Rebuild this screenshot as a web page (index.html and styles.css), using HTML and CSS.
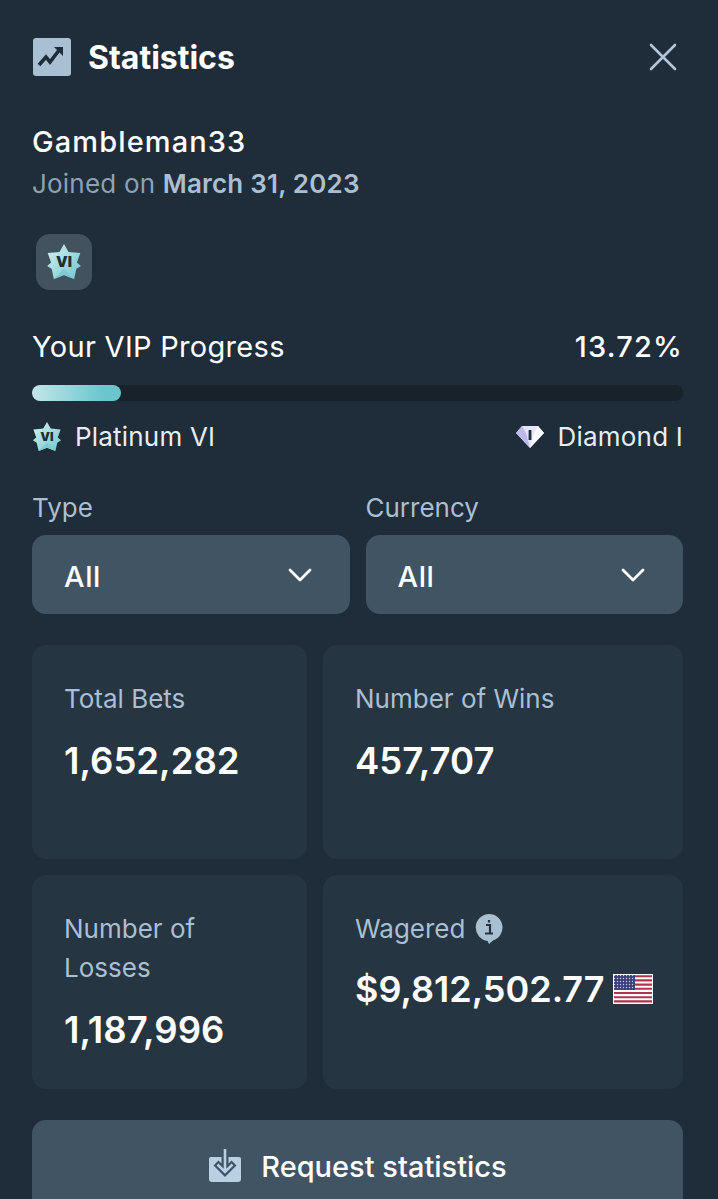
FILE: index.html
```html
<!DOCTYPE html>
<html lang="en">

<head>
    <meta charset="UTF-8">
    <meta name="viewport" content="width=device-width, initial-scale=1.0">
    <title>Statistics</title>
    <link rel="stylesheet" href="styles.css">
</head>

<body>
    <div class="panel">
        <header class="header">
            <svg class="header-icon" viewBox="0 0 38 38">
                <rect width="38" height="38" rx="3" fill="#a9bfd2" />
                <path d="M6 27l7-8 4 5 10-13" fill="none" stroke="#1f2c39" stroke-width="3.600" />
                <path d="M21 9h9v9z" fill="#1f2c39" />
            </svg>
            <h1 class="title">Statistics</h1>
            <svg class="close" viewBox="0 0 30 30">
                <path d="M3 3l24 24M27 3L3 27" stroke="#b1c6d8" stroke-width="2.600" stroke-linecap="round" />
            </svg>
        </header>

        <div class="user">Gambleman33</div>
        <div class="joined">Joined on <b>March 31, 2023</b></div>

        <div class="badge">
            <svg class="star star-big" viewBox="0 0 32 32">
                <use href="#star" />
            </svg>
        </div>

        <div class="progress-head">
            <span>Your VIP Progress</span>
            <span class="percent">13.72%</span>
        </div>
        <div class="bar">
            <div class="bar-fill" style="width: 13.72%"></div>
        </div>
        <div class="levels">
            <div class="level">
                <svg class="star" viewBox="0 0 32 32">
                    <defs>
                        <linearGradient id="star-grad" x1="0" y1="0" x2="1" y2="1">
                            <stop offset="0" stop-color="#d3f1f3" />
                            <stop offset="1" stop-color="#6fc6cd" />
                        </linearGradient>
                    </defs>
                    <g id="star">
                        <path d="M16 0l4 7 10.500 1-3 8.500 3.500 3-4 2.500L25 31l-9-3.500L7 31l-2-9-4-2.500 3.500-3-3-8.500L12 7z" fill="url(#star-grad)" />
                        <path d="M16 22l9 9-9-3.500L7 31z" fill="#7ccbd2" />
                        <text x="16" y="20.500" class="star-text">VI</text>
                    </g>
                </svg>
                <span>Platinum VI</span>
            </div>
            <div class="level">
                <svg class="diamond" viewBox="0 0 30 24">
                    <path d="M7 1h16l6 7-14 15L1 8z" fill="#e6e4fa" />
                    <path d="M1 8l6-7 4 7 4 15z" fill="#bdb9ee" />
                    <path d="M29 8l-6-7-4 7-4 15z" fill="#f7fbff" />
                    <rect x="13.600" y="5" width="2.800" height="10" fill="#1f2c39" />
                </svg>
                <span>Diamond I</span>
            </div>
        </div>

        <div class="filters">
            <div class="filter">
                <label class="filter-label">Type</label>
                <div class="select">
                    <span>All</span>
                    <svg class="chevron" viewBox="0 0 24 14">
                        <path d="M2 2l10 10L22 2" fill="none" stroke="#fff" stroke-width="2.800" stroke-linecap="round" stroke-linejoin="round" />
                    </svg>
                </div>
            </div>
            <div class="filter">
                <label class="filter-label">Currency</label>
                <div class="select">
                    <span>All</span>
                    <svg class="chevron" viewBox="0 0 24 14">
                        <path d="M2 2l10 10L22 2" fill="none" stroke="#fff" stroke-width="2.800" stroke-linecap="round" stroke-linejoin="round" />
                    </svg>
                </div>
            </div>
        </div>

        <div class="cards">
            <div class="card">
                <div class="card-label">Total Bets</div>
                <div class="card-value">1,652,282</div>
            </div>
            <div class="card">
                <div class="card-label">Number of Wins</div>
                <div class="card-value">457,707</div>
            </div>
            <div class="card">
                <div class="card-label">Number of<br>Losses</div>
                <div class="card-value">1,187,996</div>
            </div>
            <div class="card">
                <div class="card-label">Wagered
                    <svg class="info" viewBox="0 0 28 30">
                        <path d="M14 0a13.500 13.500 0 0 1 4 26.400L14 30l-1.400-3.100A13.500 13.500 0 0 1 14 0z" fill="#a9bfd2" />
                        <path d="M11 11h4v8M10 19.500h8M14 6v2.600" fill="none" stroke="#26333f" stroke-width="2.200" />
                    </svg>
                </div>
                <div class="card-value card-value-up">$9,812,502.77
                    <svg class="flag" viewBox="0 0 40 30">
                        <defs>
                            <pattern id="flag-stars" width="3" height="3" patternUnits="userSpaceOnUse">
                                <rect width="3" height="3" fill="#3c3f78" />
                                <circle cx="1.500" cy="1.500" r="0.700" fill="#c9cde6" />
                            </pattern>
                        </defs>
                        <rect width="40" height="30" fill="#fff" />
                        <path d="M1 2.200h38M1 6.400h38M1 10.600h38M1 14.800h38M1 19h38M1 23.200h38M1 27.400h38" stroke="#b8304f" stroke-width="2.100" />
                        <rect x="1" y="1" width="21" height="15" fill="url(#flag-stars)" />
                    </svg>
                </div>
            </div>
        </div>

        <button class="request" type="button">
            <svg class="request-icon" viewBox="0 0 34 34">
                <path d="M3 8h28a2 2 0 0 1 2 2v20a3 3 0 0 1-3 3H4a3 3 0 0 1-3-3V10a2 2 0 0 1 2-2z" fill="#b9d0e2" />
                <path d="M17 8v15M8 14l9 9 9-9" fill="none" stroke="#415463" stroke-width="7" />
                <path d="M17 0v23M9.500 15.500l7.500 7.500 7.500-7.500" fill="none" stroke="#b9d0e2" stroke-width="2.600" />
            </svg>
            Request statistics
        </button>
    </div>
</body>

</html>
```

FILE: styles.css
```css
html,
body {
    margin: 0;
    height: 1199px;
    overflow: hidden;
}

body {
    font-family: "Inter", "Open Sans", sans-serif;
    background-color: #1f2c39;
    color: #fff;
}

.panel {
    padding: 38px 35px 0 32px;
}

.header {
    display: flex;
    align-items: center;
    height: 38px;
    margin-bottom: 47px;
}

.header-icon {
    width: 38px;
    height: 38px;
    margin: 0 17px 0 1px;
}

.title {
    margin: 0;
    flex: 1;
    font-size: 32px;
    font-weight: 700;
}

.close {
    width: 30px;
    height: 30px;
    margin-right: 5px;
}

.user {
    font-size: 29px;
    font-weight: 500;
    line-height: 38px;
    letter-spacing: 1.1px;
}

.joined {
    margin-top: 5px;
    font-size: 26px;
    line-height: 36px;
    letter-spacing: 0.2px;
    color: #8ba2b6;
}

.joined b {
    font-weight: 600;
    color: #a9bfd2;
}

.badge {
    display: flex;
    align-items: center;
    justify-content: center;
    width: 56px;
    height: 56px;
    margin: 32px 0 38px 4px;
    background-color: #42535f;
    border-radius: 14px;
}

.star {
    width: 30px;
    height: 30px;
}

.star-big {
    width: 36px;
    height: 36px;
}

.star-text {
    font-size: 13px;
    font-weight: 900;
    text-anchor: middle;
    fill: #1f2c39;
}

.progress-head {
    display: flex;
    justify-content: space-between;
    font-size: 29px;
    line-height: 38px;
    letter-spacing: 0.3px;
}

.percent {
    font-weight: 500;
    letter-spacing: 1.200px;
}

.bar {
    height: 16px;
    margin-top: 19px;
    background-color: #17222b;
    border-radius: 8px;
}

.bar-fill {
    height: 100%;
    background: linear-gradient(90deg, #c3e6ea, #6cc5cd 80%);
    border-radius: 8px;
}

.levels {
    display: flex;
    justify-content: space-between;
    margin-top: 19px;
    font-size: 26px;
    line-height: 34px;
    letter-spacing: 0.2px;
    color: #e6eef5;
}

.level {
    display: flex;
    align-items: center;
    gap: 13px;
}

.diamond {
    width: 30px;
    height: 24px;
}

.filters {
    display: grid;
    grid-template-columns: 1fr 1fr;
    gap: 16px;
    margin-top: 37px;
}

.filter-label {
    display: block;
    font-size: 26px;
    line-height: 34px;
    color: #a9bfd2;
}

.select {
    display: flex;
    align-items: center;
    justify-content: space-between;
    height: 79px;
    margin-top: 10px;
    padding: 0 38px 0 32px;
    font-size: 29px;
    font-weight: 500;
    letter-spacing: 0.6px;
    background-color: #415463;
    border-radius: 14px;
}

.select span {
    padding-top: 3px;
}

.chevron {
    width: 24px;
    height: 14px;
}

.cards {
    display: grid;
    grid-template-columns: 275px 1fr;
    grid-auto-rows: 214px;
    gap: 16px;
    margin-top: 31px;
}

.card {
    padding: 34px 20px 0 32px;
    background-color: #263542;
    border-radius: 14px;
}

.card-label {
    display: flex;
    flex-wrap: wrap;
    align-items: center;
    gap: 0 10px;
    font-size: 26px;
    line-height: 39px;
    color: #a9bfd2;
}

.card-value {
    display: flex;
    align-items: center;
    gap: 8px;
    margin-top: 19px;
    font-size: 36.500px;
    font-weight: 600;
    line-height: 48px;
    white-space: nowrap;
}

.card-value-up {
    margin-top: 17px;
    font-size: 36px;
}

.info {
    width: 28px;
    height: 30px;
}

.flag {
    width: 40px;
    height: 30px;
}

.request {
    display: flex;
    align-items: center;
    justify-content: center;
    gap: 19px;
    width: 100%;
    height: 92px;
    margin-top: 31px;
    font-family: inherit;
    font-size: 29px;
    font-weight: 500;
    color: #fff;
    background-color: #415463;
    border: none;
    border-radius: 14px;
}

.request-icon {
    width: 34px;
    height: 34px;
}
```
